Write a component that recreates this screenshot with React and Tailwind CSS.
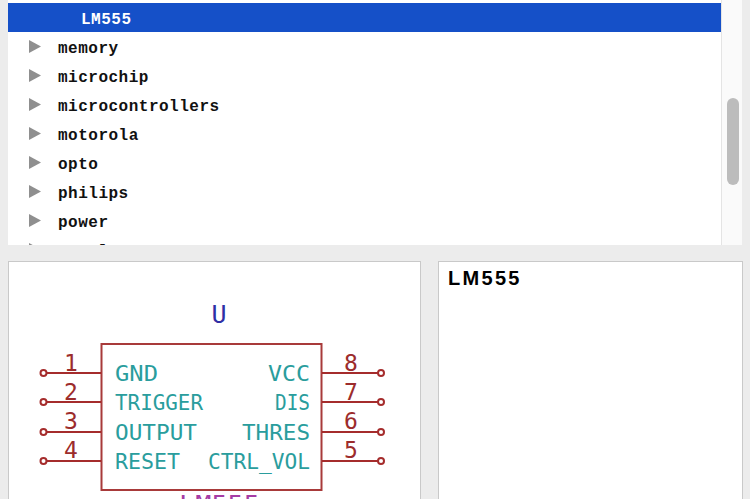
import React from 'react';

const libs = ['memory', 'microchip', 'microcontrollers', 'motorola', 'opto', 'philips', 'power', 'regulator'];

const leftPins = [
  { num: '1', name: 'GND', y: 373, w: 43, up: 2 },
  { num: '2', name: 'TRIGGER', y: 402, w: 88, up: 2 },
  { num: '3', name: 'OUTPUT', y: 432, w: 82, up: 3 },
  { num: '4', name: 'RESET', y: 461, w: 65, up: 3 },
];
const rightPins = [
  { num: '8', name: 'VCC', y: 373, w: 42, up: 2 },
  { num: '7', name: 'DIS', y: 402, w: 35, up: 2 },
  { num: '6', name: 'THRES', y: 432, w: 68, up: 3 },
  { num: '5', name: 'CTRL_VOL', y: 461, w: 102, up: 3 },
];

const Row = ({ name }) => (
  <div className="flex h-[29px] shrink-0 items-center">
    <svg className="ml-[21px] h-[13px] w-[12px]" viewBox="0 0 12 13">
      <path d="M0 0 L12 6.5 L0 13 Z" fill="#8f8f8f" />
    </svg>
    <span className="ml-[17px] pt-[4px] font-['Liberation_Mono',monospace] text-[16px] font-bold tracking-[0.5px] text-[#111]">{name}</span>
  </div>
);

const Schematic = () => (
  <svg className="h-[238px] w-[413px]" viewBox="8 261 413 238" fontFamily="'DejaVu Sans Mono', monospace">
    <text x="219" y="323" fontSize="25" fill="#2f2fa5" textAnchor="middle">U</text>
    <rect x="101.5" y="344" width="220" height="146" fill="none" stroke="#a83a3a" strokeWidth="2" />
    {leftPins.map((p) => (
      <g key={p.num}>
        <line x1="46.5" y1={p.y} x2="101" y2={p.y} stroke="#a52c2c" strokeWidth="2" />
        <circle cx="43.5" cy={p.y} r="3" fill="none" stroke="#a52c2c" strokeWidth="2" />
        <text x="71" y={p.y - p.up} fontSize="23" fill="#9c2c2c" textAnchor="middle">{p.num}</text>
        <text x="115" y={p.y + 8} fontSize="21" fill="#2a9d9d" textLength={p.w} lengthAdjust="spacingAndGlyphs">{p.name}</text>
      </g>
    ))}
    {rightPins.map((p) => (
      <g key={p.num}>
        <line x1="322" y1={p.y} x2="378" y2={p.y} stroke="#a52c2c" strokeWidth="2" />
        <circle cx="381" cy={p.y} r="3" fill="none" stroke="#a52c2c" strokeWidth="2" />
        <text x="351" y={p.y - p.up} fontSize="23" fill="#9c2c2c" textAnchor="middle">{p.num}</text>
        <text x={310 - p.w} y={p.y + 8} fontSize="21" fill="#2a9d9d" textLength={p.w} lengthAdjust="spacingAndGlyphs">{p.name}</text>
      </g>
    ))}
    <text x="179" y="512" fontSize="23" fill="#a53ca5" textLength="81" lengthAdjust="spacingAndGlyphs">LM555</text>
  </svg>
);

export default function App() {
  return (
    <div className="flex h-[499px] w-[750px] flex-col overflow-hidden bg-[#ececec] px-2">
      <div className="flex h-[245px] w-[734px] shrink-0">
        <div className="flex w-[713px] flex-col overflow-hidden bg-white pt-[3px]">
          <div className="flex h-[29px] shrink-0 items-center bg-[#1550c8] pl-[73px] pt-[4px] font-['Liberation_Mono',monospace] text-[16px] font-bold tracking-[0.5px] text-white">
            LM555
          </div>
          {libs.map((name) => (
            <Row key={name} name={name} />
          ))}
        </div>
        <div className="w-[21px] border-l border-[#e4e4e4] bg-[#fafafa] pl-[5px] pt-[98px]">
          <div className="h-[87px] w-[12px] rounded-full bg-[#bcbcbc]" />
        </div>
      </div>
      <div className="mt-4 flex min-h-0 flex-1 gap-[17px]">
        <div className="h-[300px] w-[413px] shrink-0 border border-[#c9c9c9] bg-white">
          <div className="-m-px">
            <Schematic />
          </div>
        </div>
        <div className="h-[300px] w-[305px] shrink-0 border border-[#c9c9c9] bg-white pl-[9px] pt-[1px] font-['Liberation_Sans',sans-serif] text-[20px] font-bold tracking-[2.3px] text-black">
          LM555
        </div>
      </div>
    </div>
  );
}
